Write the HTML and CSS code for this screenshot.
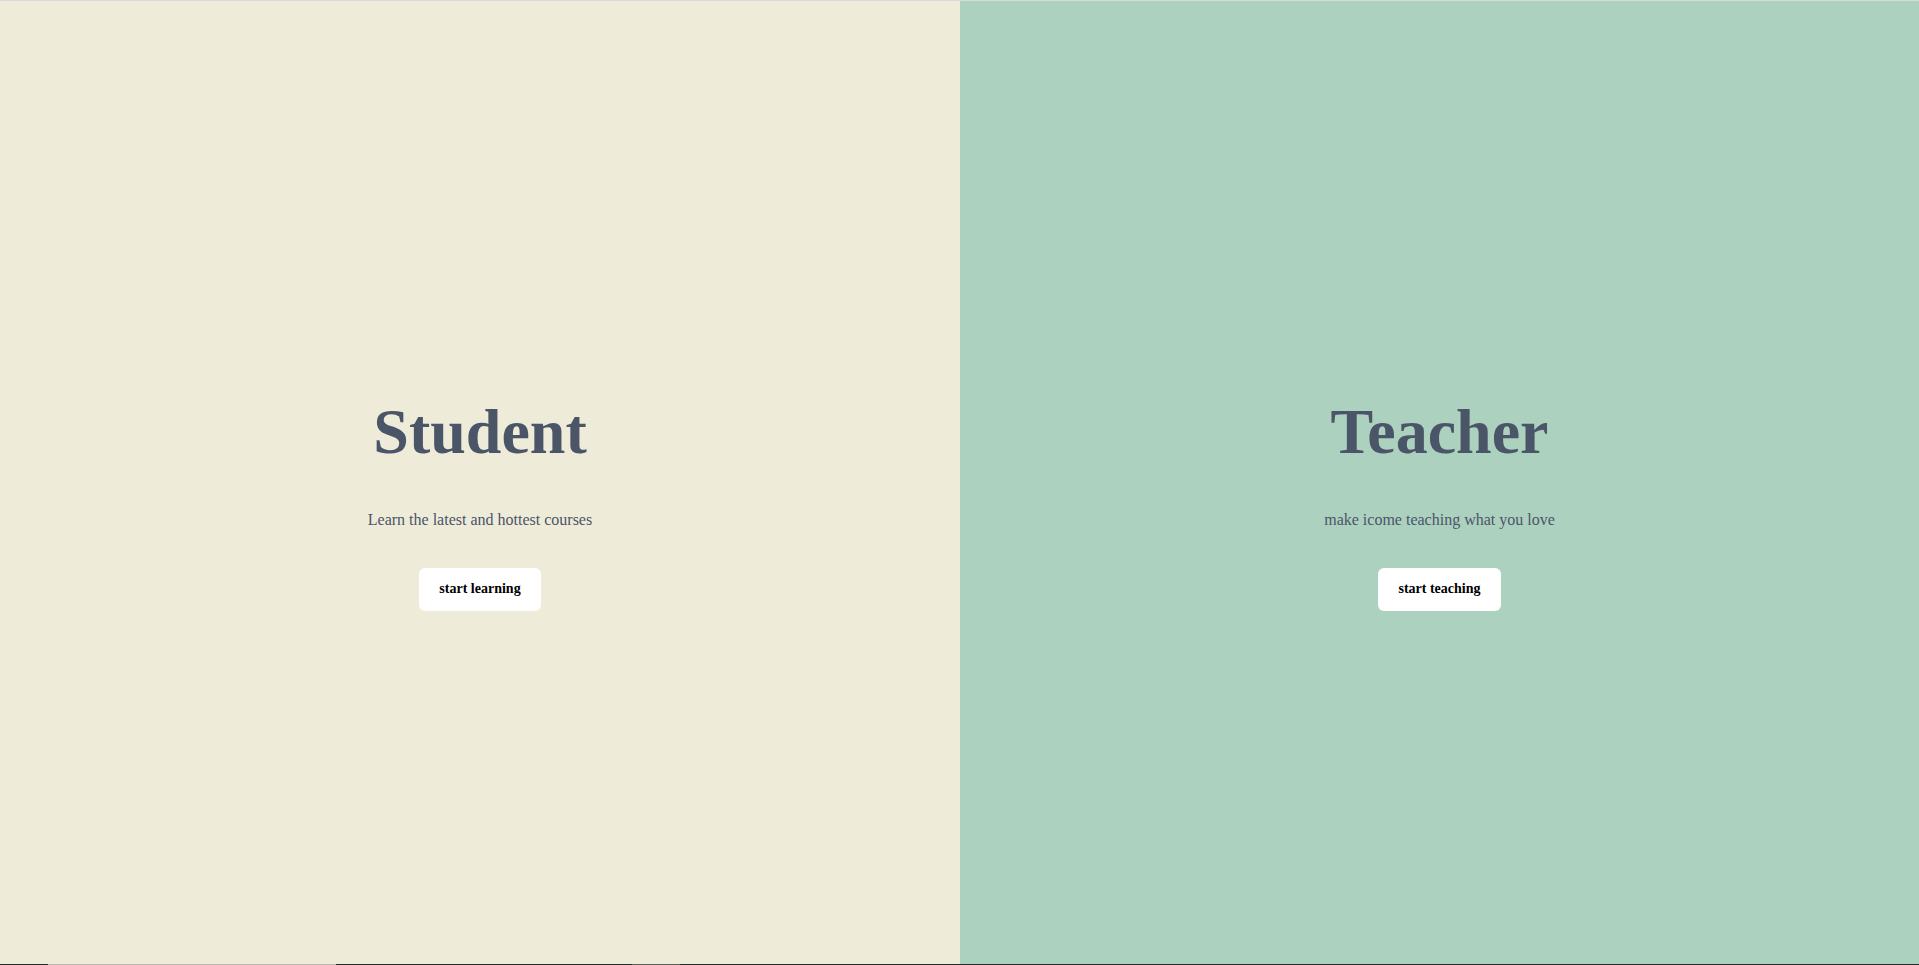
FILE: index.html
```html
<!DOCTYPE html>
<html lang="en">
<head>
<meta charset="utf-8">
<title>Student / Teacher</title>
<link rel="stylesheet" href="styles.css">
</head>
<body>
<div class="topline"></div>
<main class="split">
  <section class="panel panel-student">
    <h1 class="title">Student</h1>
    <p class="subtitle">Learn the latest and hottest courses</p>
    <a class="btn" href="#">start learning</a>
  </section>
  <section class="panel panel-teacher">
    <h1 class="title">Teacher</h1>
    <p class="subtitle">make icome teaching what you love</p>
    <a class="btn" href="#">start teaching</a>
  </section>
</main>
<div class="bottomline">
  <span class="seg dark" style="width:48px"></span>
  <span class="seg light" style="width:288px"></span>
  <span class="seg dark" style="width:296px"></span>
  <span class="seg mid" style="width:48px"></span>
  <span class="seg dark fill"></span>
</div>
</body>
</html>
```
FILE: styles.css
```css
html, body {
  margin: 0;
  padding: 0;
  height: 100%;
}
body {
  font-family: "Liberation Serif", "Times New Roman", serif;
  display: flex;
  flex-direction: column;
  overflow: hidden;
}
.topline {
  height: 1px;
  background: #dadada;
  flex: none;
}
.split {
  display: flex;
  flex: 1;
  min-height: 0;
}
.panel {
  flex: 1 1 0;
  display: flex;
  flex-direction: column;
  align-items: center;
  justify-content: center;
  text-align: center;
}
.panel-student {
  background: #efebd9;
  flex-basis: 960px;
  flex-grow: 0;
}
.panel-teacher {
  background: #acd1bf;
}
.title {
  font-size: 64px;
  font-weight: bold;
  color: #4a5568;
  margin: 43px 0 42px;
  line-height: 74px;
}
.subtitle {
  font-size: 16px;
  color: #4a5568;
  margin: 0 0 39px;
  line-height: 18px;
}
.btn {
  display: inline-block;
  background: #ffffff;
  color: #000000;
  font-weight: bold;
  font-size: 14px;
  line-height: 16px;
  padding: 13px 20px 14px;
  margin-bottom: 2px;
  border-radius: 6px;
  text-decoration: none;
}
.bottomline {
  height: 1px;
  flex: none;
  display: flex;
}
.seg { height: 1px; display: block; }
.seg.dark { background: #232a2a; }
.seg.light { background: #b9b9b1; }
.seg.mid { background: #5a5f5c; }
.seg.fill { flex: 1; }
```
